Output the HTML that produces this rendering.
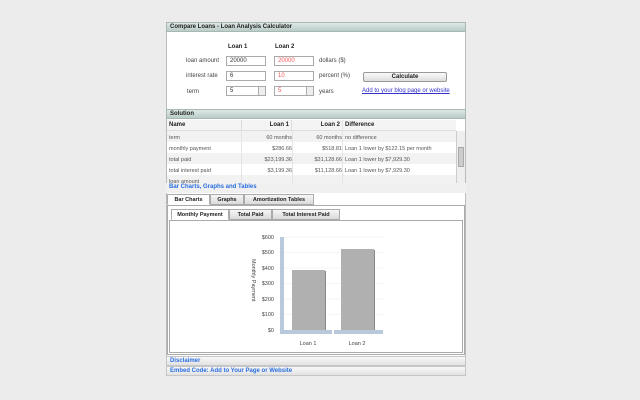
<!DOCTYPE html><html><head><style>
body{margin:0;width:640px;height:400px;background:#ececec;font-family:"Liberation Sans",sans-serif;font-size:6px;color:#333;position:relative;overflow:hidden}
div,span{position:absolute;box-sizing:border-box}
.hd{left:166px;width:300px;height:10px;background:linear-gradient(#dde8e5,#b9ccc7);border:1px solid #a9b8b4;font-weight:bold;font-size:6px;padding:1px 3px;color:#222}
.bar{left:166px;width:300px;height:10px;background:linear-gradient(#f8f8f8,#e2e2e2);border:1px solid #c6c6c6;font-weight:bold;color:#2a6ee0;padding:1px 3px}
.in{height:10px;width:40px;border:1px solid #aaa;background:#fff;padding:1px 3px;font-size:6px}
.red{color:#e55}
.lab{font-size:6px;color:#444}
.tab{height:11px;border:1px solid #aaa;background:linear-gradient(#f6f6f6,#dadada);font-weight:bold;font-size:5.5px;text-align:center;padding-top:2px;color:#222}
.c{font-size:5.5px;color:#555}
</style></head><body>
<div style="left:166px;top:22px;width:300px;height:354px;background:#fff;border:1px solid #bbb"></div>
<div class="hd" style="top:22px">Compare Loans - Loan Analysis Calculator</div>
<span style="left:228px;top:44px;font-weight:bold;color:#222">Loan 1</span>
<span style="left:275px;top:44px;font-weight:bold;color:#222">Loan 2</span>
<span class="lab" style="left:186px;top:58px">loan amount</span>
<span class="lab" style="left:186px;top:73px">interest rate</span>
<span class="lab" style="left:187px;top:89px">term</span>
<div class="in" style="left:226px;top:56px">20000</div>
<div class="in red" style="left:274px;top:56px">20000</div>
<div class="in" style="left:226px;top:71px">6</div>
<div class="in red" style="left:274px;top:71px">10</div>
<div class="in" style="left:226px;top:86px">5<span style="right:0;top:0;width:7px;height:8px;border-left:1px solid #aaa;background:#eee"></span></div>
<div class="in red" style="left:274px;top:86px">5<span style="right:0;top:0;width:7px;height:8px;border-left:1px solid #aaa;background:#eee"></span></div>
<span class="lab" style="left:319px;top:58px">dollars ($)</span>
<span class="lab" style="left:319px;top:73px">percent (%)</span>
<span class="lab" style="left:319px;top:89px">years</span>
<div style="left:363px;top:72px;width:84px;height:10px;border:1px solid #999;border-radius:2px;background:linear-gradient(#fafafa,#ddd);font-weight:bold;text-align:center;padding-top:1px;color:#222">Calculate</div>
<span style="left:362px;top:88px;color:#33c;text-decoration:underline">Add to your blog page or website</span>
<div class="hd" style="top:109px">Solution</div>
<div style="left:167px;top:120px;width:298px;height:64px;background:#fff;border-bottom:1px solid #ccc"></div>
<div style="left:167px;top:120px;width:289px;height:11px;background:#f4f4f4;border-bottom:1px solid #ddd;font-weight:bold;color:#222">
<span style="left:2px;top:2px">Name</span><span style="left:74px;top:0;width:51px;height:11px;border-left:1px solid #ddd;border-right:1px solid #ddd;text-align:right;padding:2px 2px">Loan 1</span><span style="left:125px;top:2px;width:50px;text-align:right;padding-right:2px">Loan 2</span><span style="left:178px;top:2px">Difference</span></div>
<div style="left:167px;top:131px;width:289px;height:11px;background:#f2f2f2"></div>
<div style="left:167px;top:153px;width:289px;height:11px;background:#f2f2f2"></div>
<div style="left:167px;top:175px;width:289px;height:9px;background:#f2f2f2"></div>
<div class="c" style="left:169px;top:133px;line-height:11px;width:288px">
<span style="top:0">term</span><span style="top:11px">monthly payment</span><span style="top:22px">total paid</span><span style="top:33px">total interest paid</span><span style="top:44px;height:8px;overflow:hidden">loan amount</span>
<span style="left:73px;width:50px;text-align:right;top:0">60 months</span><span style="left:73px;width:50px;text-align:right;top:11px">$286.66</span><span style="left:73px;width:50px;text-align:right;top:22px">$23,199.36</span><span style="left:73px;width:50px;text-align:right;top:33px">$3,199.36</span>
<span style="left:123px;width:50px;text-align:right;top:0">60 months</span><span style="left:123px;width:50px;text-align:right;top:11px">$518.81</span><span style="left:123px;width:50px;text-align:right;top:22px">$31,128.66</span><span style="left:123px;width:50px;text-align:right;top:33px">$11,128.66</span>
<span style="left:176px;top:0">no difference</span><span style="left:176px;top:11px">Loan 1 lower by $122.15 per month</span><span style="left:176px;top:22px">Loan 1 lower by $7,929.30</span><span style="left:176px;top:33px">Loan 1 lower by $7,929.30</span></div>
<div style="left:456px;top:131px;width:9px;height:53px;background:#eee;border-left:1px solid #ccc"><span style="left:1px;top:16px;width:6px;height:20px;background:#ccc;border:1px solid #aaa"></span></div>
<div style="left:241px;top:131px;width:1px;height:53px;background:#e4e4e4"></div>
<div style="left:292px;top:131px;width:1px;height:53px;background:#e4e4e4"></div>
<div style="left:342px;top:120px;width:1px;height:64px;background:#e4e4e4"></div>
<div class="bar" style="top:183px;border:none;background:#f0f0f0">Bar Charts, Graphs and Tables</div>
<div class="tab" style="left:167px;top:194px;width:43px;background:#fff;border-bottom-color:#fff">Bar Charts</div>
<div class="tab" style="left:210px;top:194px;width:34px">Graphs</div>
<div class="tab" style="left:244px;top:194px;width:70px">Amortization Tables</div>
<div style="left:167px;top:205px;width:298px;height:150px;border:1px solid #aaa;background:#fff"></div>
<div class="tab" style="left:171px;top:209px;width:58px;background:#fff;border-bottom-color:#fff">Monthly Payment</div>
<div class="tab" style="left:229px;top:209px;width:43px">Total Paid</div>
<div class="tab" style="left:272px;top:209px;width:68px">Total Interest Paid</div>
<div style="left:169px;top:220px;width:294px;height:133px;border:1px solid #aaa;background:#fff"></div>
<svg style="position:absolute;left:0;top:0" width="640" height="400">
<g stroke="#eee" stroke-width="0.6"><line x1="284" y1="237" x2="384" y2="237"/><line x1="284" y1="252.5" x2="384" y2="252.5"/><line x1="284" y1="268" x2="384" y2="268"/><line x1="284" y1="283.5" x2="384" y2="283.5"/><line x1="284" y1="299" x2="384" y2="299"/><line x1="284" y1="314.5" x2="384" y2="314.5"/></g>
<rect x="280" y="237" width="4" height="97" fill="#b8c9dc"/>
<rect x="284" y="330" width="48" height="4" fill="#b8c9dc"/><rect x="334" y="330" width="49" height="4" fill="#b8c9dc"/>
<rect x="293" y="271" width="33" height="59" fill="#888"/><rect x="292" y="270" width="33" height="60" fill="#b0b0b0"/>
<rect x="342" y="250" width="33" height="80" fill="#888"/><rect x="341" y="249" width="33" height="81" fill="#b0b0b0"/>
<g font-family="Liberation Sans" font-size="5.5" fill="#444" text-anchor="end"><text x="274" y="239">$600</text><text x="274" y="254">$500</text><text x="274" y="270">$400</text><text x="274" y="285">$300</text><text x="274" y="301">$200</text><text x="274" y="316">$100</text><text x="274" y="332">$0</text></g>
<text x="252" y="259" font-family="Liberation Sans" font-size="5.5" fill="#444" transform="rotate(90 252 259)">Monthly Payment</text>
<g font-family="Liberation Sans" font-size="5.5" fill="#444" text-anchor="middle"><text x="308" y="345">Loan 1</text><text x="357" y="345">Loan 2</text></g>
</svg>
<div class="bar" style="top:356px">Disclaimer</div>
<div class="bar" style="top:366px">Embed Code: Add to Your Page or Website</div>
</body></html>
